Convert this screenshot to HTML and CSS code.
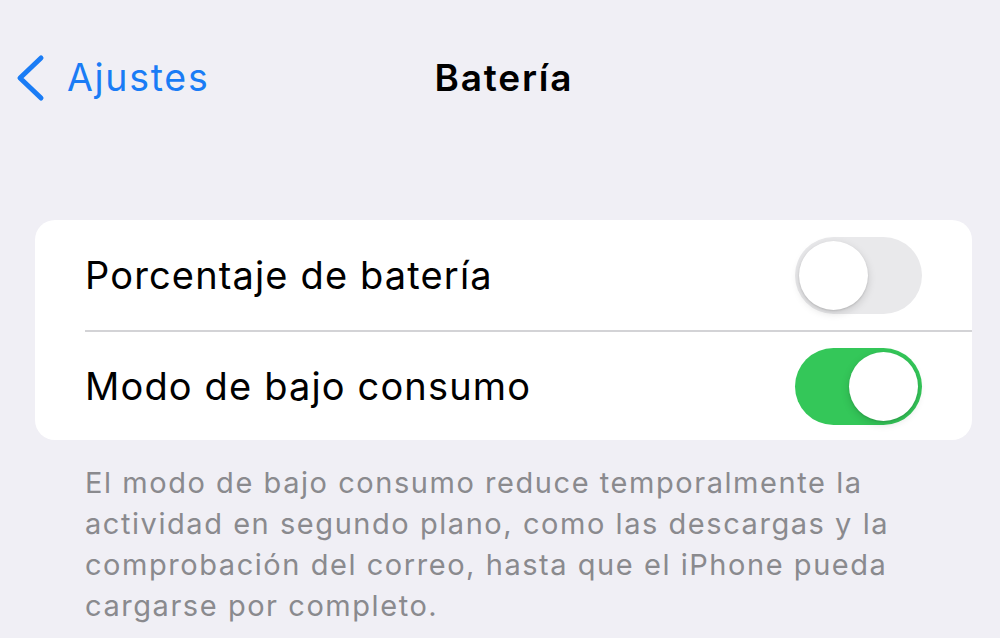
FILE: index.html
```html
<!DOCTYPE html>
<html lang="es">
<head>
	<meta charset="UTF-8">
	<title>Batería</title>
	<link rel="stylesheet" href="styles.css">
</head>
<body>
	<div class="nav">
		<a class="back" href="#">
			<svg class="chevron" width="32" height="48" viewBox="0 0 32 48">
				<path d="M27 4 L6 24 L27 44" fill="none" stroke="#1a7cf5" stroke-width="5" stroke-linecap="round" stroke-linejoin="round"/>
			</svg>
			<span>Ajustes</span>
		</a>
		<h1 class="title">Batería</h1>
	</div>

	<div class="group">
		<div class="row">
			<span class="label">Porcentaje de batería</span>
			<span class="switch"><span class="knob"></span></span>
		</div>
		<div class="row">
			<span class="label">Modo de bajo consumo</span>
			<span class="switch on"><span class="knob"></span></span>
		</div>
	</div>
	<p class="footer">El modo de bajo consumo reduce temporalmente la actividad en segundo plano, como las descargas y la comprobación del correo, hasta que el iPhone pueda cargarse por completo.</p>
</body>
</html>
```

FILE: styles.css
```css
*{
	margin: 0;
	padding: 0;
	box-sizing: border-box;
}
body{
	background: #f0eff5;
	font-family: Inter, "Liberation Sans", sans-serif;
	color: #000;
	width: 1000px;
	height: 638px;
	overflow: hidden;
}
.nav{
	position: relative;
	height: 156px;
	display: flex;
	align-items: flex-start;
	padding: 54px 0 0 14px;
}
.back{
	display: flex;
	align-items: center;
	gap: 21px;
	color: #1a7cf5;
	text-decoration: none;
	font-size: 37.5px;
	letter-spacing: 1.7px;
	line-height: 48px;
}
.title{
	position: absolute;
	left: 0;
	right: 0;
	top: 54px;
	text-align: center;
	font-size: 37px;
	letter-spacing: 1.8px;
	line-height: 48px;
	font-weight: 600;
	padding-left: 8px;
}
.group{
	margin: 64px 28px 0 35px;
	background: #fff;
	border-radius: 20px;
	overflow: hidden;
}
.row{
	height: 110px;
	display: flex;
	align-items: center;
	justify-content: space-between;
	margin-left: 50px;
	padding-right: 50px;
}
.row + .row{
	border-top: 2px solid #d3d3d6;
}
.label{
	font-size: 38px;
	letter-spacing: 1.15px;
}
.switch{
	position: relative;
	width: 127px;
	height: 77px;
	border-radius: 39px;
	background: #e9e9eb;
}
.switch .knob{
	position: absolute;
	top: 4px;
	left: 4px;
	width: 69px;
	height: 69px;
	border-radius: 50%;
	background: #fff;
	box-shadow: 0 3px 8px rgba(0,0,0,0.15), 0 1px 2px rgba(0,0,0,0.12);
}
.switch.on{
	background: #34c759;
}
.switch.on .knob{
	left: 54px;
}
.footer{
	margin: 22px 60px 0 85px;
	font-size: 29px;
	letter-spacing: 1.55px;
	line-height: 41px;
	color: #8a8a8e;
}
```
